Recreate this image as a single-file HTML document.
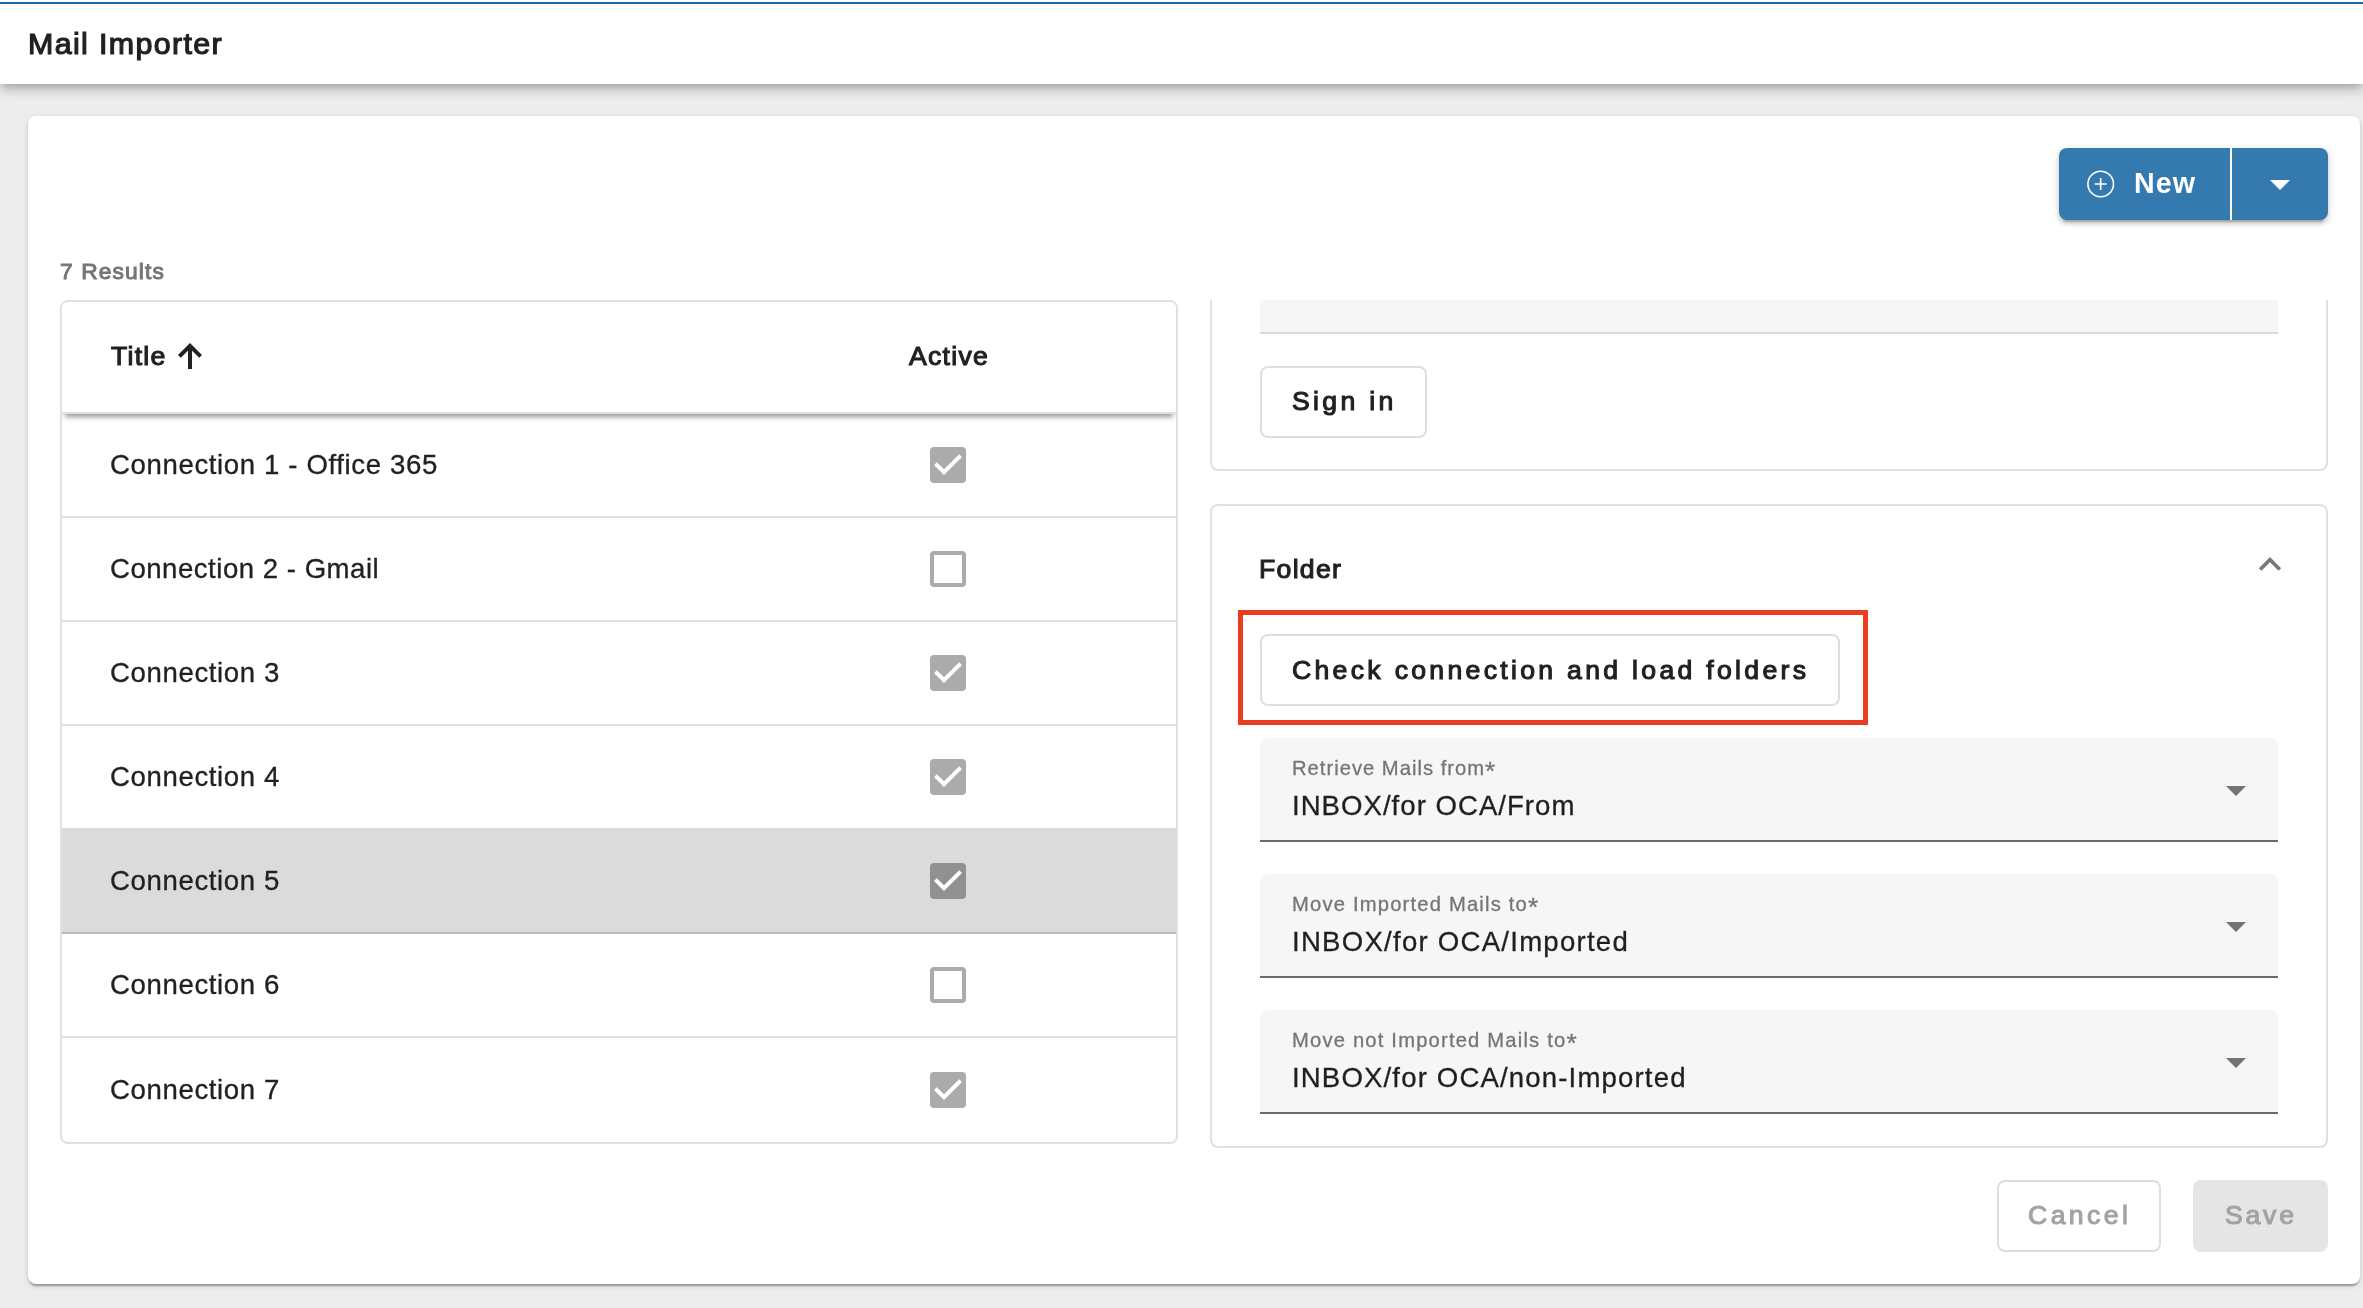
<!DOCTYPE html>
<html lang="en">
<head>
<meta charset="utf-8">
<title>Mail Importer</title>
<style>
*{box-sizing:border-box;margin:0;padding:0}
html,body{width:2363px;height:1308px;overflow:hidden}
body{background:#ededed;font-family:"Liberation Sans",sans-serif;color:#212121;position:relative}
.abs{position:absolute}
.t{position:absolute;white-space:nowrap;line-height:1;will-change:transform}
#topbar{left:0;top:0;width:2363px;height:84px;background:#fff;box-shadow:0 4px 8px -2px rgba(0,0,0,.2),0 8px 10px 0 rgba(0,0,0,.10),0 2px 20px 0 rgba(0,0,0,.08)}
#blue{left:0;top:2px;width:2363px;height:2px;background:#1e69a3}
#card{left:28px;top:116px;width:2332px;height:1168px;background:#fff;border-radius:8px;box-shadow:0 4px 2px -2px rgba(0,0,0,.2),0 2px 2px 0 rgba(0,0,0,.14),0 2px 6px 0 rgba(0,0,0,.12)}
#newbtn{left:2059px;top:148px;width:269px;height:72px;background:#357aae;border-radius:8px;box-shadow:0 6px 2px -4px rgba(0,0,0,.2),0 4px 4px 0 rgba(0,0,0,.14),0 2px 10px 0 rgba(0,0,0,.12)}
#newdiv{left:2230px;top:148px;width:2px;height:72px;background:#fff}
#table{left:60px;top:300px;width:1118px;height:844px;border:2px solid #e0e0e0;border-radius:8px;background:#fff;overflow:hidden}
#thead{left:0;top:0;width:1114px;height:112px;background:#fff;border-bottom:2px solid #e0e0e0;box-shadow:0 6px 5px -3px rgba(0,0,0,.4);z-index:2}
.row{position:absolute;left:0;width:1114px;height:104px;border-bottom:2px solid #e0e0e0}
.row.sel{background:#dbdbdb;border-bottom-color:#b8b8b8}
.row.last{border-bottom:none}
.row.presel{border-bottom-color:#dbdbdb}
.rt{position:absolute;left:47.7px;font-size:27.6px;-webkit-text-stroke:0.3px currentColor;line-height:1;white-space:nowrap;color:#212121;will-change:transform}
.cb{position:absolute;left:868px;width:36px;height:36px;border-radius:4px}
.cb.on{background:#ababab}
.cb.off{border:4px solid #ababab;background:#fff}
.sel .cb.on{background:#919191}
.cb svg{position:absolute;left:0;top:0}
#right{left:1200px;top:300px;width:1140px;height:860px;overflow:hidden}
.panel{position:absolute;left:10px;width:1118px;border:2px solid #e0e0e0;border-radius:8px;background:#fff}
.field{position:absolute;left:1260px;width:1018px;height:104px;background:#f6f6f6;border-radius:8px 8px 0 0;border-bottom:2px solid #6b6b6b}
.tri{position:absolute;width:0;height:0;border-left:10px solid transparent;border-right:10px solid transparent;border-top:10px solid #737373}
.obtn{position:absolute;height:72px;border:2px solid #dedede;border-radius:8px;background:#fff}
#redbox{left:1238px;top:609.5px;width:630px;height:115px;border:5px solid #e83c23}
</style>
</head>
<body>
<div id="topbar" class="abs"></div>
<div id="blue" class="abs"></div>
<div class="t" style="left:27.6px;top:28px;font-size:30.4px;font-weight:400;-webkit-text-stroke:1.2px currentColor;letter-spacing:1.36px;color:#212121;">Mail Importer</div>

<div id="card" class="abs"></div>

<div id="newbtn" class="abs"></div>
<div id="newdiv" class="abs"></div>
<svg class="abs" style="left:2086px;top:169px" width="30" height="30" viewBox="0 0 30 30"><circle cx="14.7" cy="15" r="12.8" fill="none" stroke="#fff" stroke-width="1.6"/><path d="M8.7 15H20.7M14.7 9V21" stroke="#fff" stroke-width="1.6" fill="none"/></svg>
<div class="t" style="left:2133.8px;top:169px;font-size:28.6px;font-weight:700;letter-spacing:1.15px;color:#fff;">New</div>
<div class="tri" style="left:2270px;top:180px;border-top-color:#fff"></div>

<div class="t" style="left:59.6px;top:260px;font-size:22.8px;font-weight:400;-webkit-text-stroke:1.0px currentColor;letter-spacing:1.1px;color:#757575;">7 Results</div>

<div id="table" class="abs">
  <div id="thead" class="abs"></div>
  <div class="row" style="top:112px"><div class="rt" style="top:37.0px;letter-spacing:0.62px">Connection 1 - Office 365</div><div class="cb on" style="top:33px"><svg width="36" height="36" viewBox="0 0 36 36"><path d="M14 28L4 18L6.82 15.18L14 22.34L29.18 7.16L32 10Z" fill="#fff"/></svg></div></div>
  <div class="row" style="top:216px"><div class="rt" style="top:37.0px;letter-spacing:0.5px">Connection 2 - Gmail</div><div class="cb off" style="top:33px"></div></div>
  <div class="row" style="top:320px"><div class="rt" style="top:37.0px;letter-spacing:0.62px">Connection 3</div><div class="cb on" style="top:33px"><svg width="36" height="36" viewBox="0 0 36 36"><path d="M14 28L4 18L6.82 15.18L14 22.34L29.18 7.16L32 10Z" fill="#fff"/></svg></div></div>
  <div class="row presel" style="top:424px"><div class="rt" style="top:37.0px;letter-spacing:0.62px">Connection 4</div><div class="cb on" style="top:33px"><svg width="36" height="36" viewBox="0 0 36 36"><path d="M14 28L4 18L6.82 15.18L14 22.34L29.18 7.16L32 10Z" fill="#fff"/></svg></div></div>
  <div class="row sel" style="top:528px"><div class="rt" style="top:37.0px;letter-spacing:0.62px">Connection 5</div><div class="cb on" style="top:33px"><svg width="36" height="36" viewBox="0 0 36 36"><path d="M14 28L4 18L6.82 15.18L14 22.34L29.18 7.16L32 10Z" fill="#fff"/></svg></div></div>
  <div class="row" style="top:632px"><div class="rt" style="top:37.0px;letter-spacing:0.62px">Connection 6</div><div class="cb off" style="top:33px"></div></div>
  <div class="row last" style="top:736px"><div class="rt" style="top:38.0px;letter-spacing:0.62px">Connection 7</div><div class="cb on" style="top:34px"><svg width="36" height="36" viewBox="0 0 36 36"><path d="M14 28L4 18L6.82 15.18L14 22.34L29.18 7.16L32 10Z" fill="#fff"/></svg></div></div>
</div>
<div class="t" style="left:110.6px;top:343px;font-size:26.6px;font-weight:400;-webkit-text-stroke:1.1px currentColor;letter-spacing:1.27px;color:#212121;z-index:3;">Title</div>
<svg class="abs" style="left:170px;top:336px;z-index:3" width="40" height="40" viewBox="170 336 40 40"><path d="M190 369V347M179.4 356.4L190 345.8L200.6 356.4" fill="none" stroke="#212121" stroke-width="4"/></svg>
<div class="t" style="left:908.8px;top:343px;font-size:26.6px;font-weight:400;-webkit-text-stroke:1.1px currentColor;letter-spacing:1.27px;color:#212121;z-index:3;">Active</div>

<div id="right" class="abs">
  <div class="panel" style="top:-200px;height:371px"></div>
  <div class="panel" style="top:204px;height:644px"></div>
</div>

<div class="abs" style="left:1260px;top:300px;width:1018px;height:34px;background:#f6f6f6;border-bottom:2px solid #dadada"></div>

<div class="obtn" style="left:1260px;top:366px;width:167px"></div>
<div class="t" style="left:1292.0px;top:388px;font-size:26.6px;font-weight:400;-webkit-text-stroke:1.1px currentColor;letter-spacing:3.32px;color:#212121;">Sign in</div>

<div class="t" style="left:1259.1px;top:556px;font-size:26.6px;font-weight:400;-webkit-text-stroke:1.1px currentColor;letter-spacing:1.3px;color:#212121;">Folder</div>
<svg class="abs" style="left:2250px;top:545px" width="40" height="40" viewBox="2250 545 40 40"><path transform="translate(2270 557) scale(1.86) translate(-12 -8)" d="M7.41,15.41L12,10.83L16.59,15.41L18,14L12,8L6,14L7.41,15.41Z" fill="#787878"/></svg>

<div id="redbox" class="abs"></div>
<div class="obtn" style="left:1260px;top:634px;width:580px"></div>
<div class="t" style="left:1291.8px;top:657px;font-size:26.6px;font-weight:400;-webkit-text-stroke:1.1px currentColor;letter-spacing:3.31px;color:#212121;">Check connection and load folders</div>

<div class="field" style="top:738px"></div>
<div class="t" style="left:1292.4px;top:758px;font-size:20.2px;font-weight:400;-webkit-text-stroke:0.3px currentColor;letter-spacing:1.01px;color:#757575;">Retrieve Mails from<span style="font-size:1.3em;position:relative;top:0.2em;line-height:0">*</span></div>
<div class="t" style="left:1291.8px;top:792px;font-size:27.6px;font-weight:400;-webkit-text-stroke:0.3px currentColor;letter-spacing:1.01px;color:#1f1f1f;">INBOX/for OCA/From</div>
<div class="tri" style="left:2226px;top:786px"></div>
<div class="field" style="top:874px"></div>
<div class="t" style="left:1292.4px;top:894px;font-size:20.2px;font-weight:400;-webkit-text-stroke:0.3px currentColor;letter-spacing:1.19px;color:#757575;">Move Imported Mails to<span style="font-size:1.3em;position:relative;top:0.2em;line-height:0">*</span></div>
<div class="t" style="left:1291.8px;top:928px;font-size:27.6px;font-weight:400;-webkit-text-stroke:0.3px currentColor;letter-spacing:1.24px;color:#1f1f1f;">INBOX/for OCA/Imported</div>
<div class="tri" style="left:2226px;top:922px"></div>
<div class="field" style="top:1010px"></div>
<div class="t" style="left:1292.4px;top:1030px;font-size:20.2px;font-weight:400;-webkit-text-stroke:0.3px currentColor;letter-spacing:1.19px;color:#757575;">Move not Imported Mails to<span style="font-size:1.3em;position:relative;top:0.2em;line-height:0">*</span></div>
<div class="t" style="left:1291.8px;top:1064px;font-size:27.6px;font-weight:400;-webkit-text-stroke:0.3px currentColor;letter-spacing:1.14px;color:#1f1f1f;">INBOX/for OCA/non-Imported</div>
<div class="tri" style="left:2226px;top:1058px"></div>

<div class="obtn" style="left:1997px;top:1180px;width:164px"></div>
<div class="t" style="left:2028.4px;top:1202px;font-size:26.6px;font-weight:400;-webkit-text-stroke:1.1px currentColor;letter-spacing:3.43px;color:#a3a3a3;">Cancel</div>
<div class="abs" style="left:2193px;top:1180px;width:135px;height:72px;border-radius:8px;background:#e5e5e5"></div>
<div class="t" style="left:2225.3px;top:1202px;font-size:26.6px;font-weight:400;-webkit-text-stroke:1.1px currentColor;letter-spacing:2.78px;color:#a3a3a3;">Save</div>
</body>
</html>
